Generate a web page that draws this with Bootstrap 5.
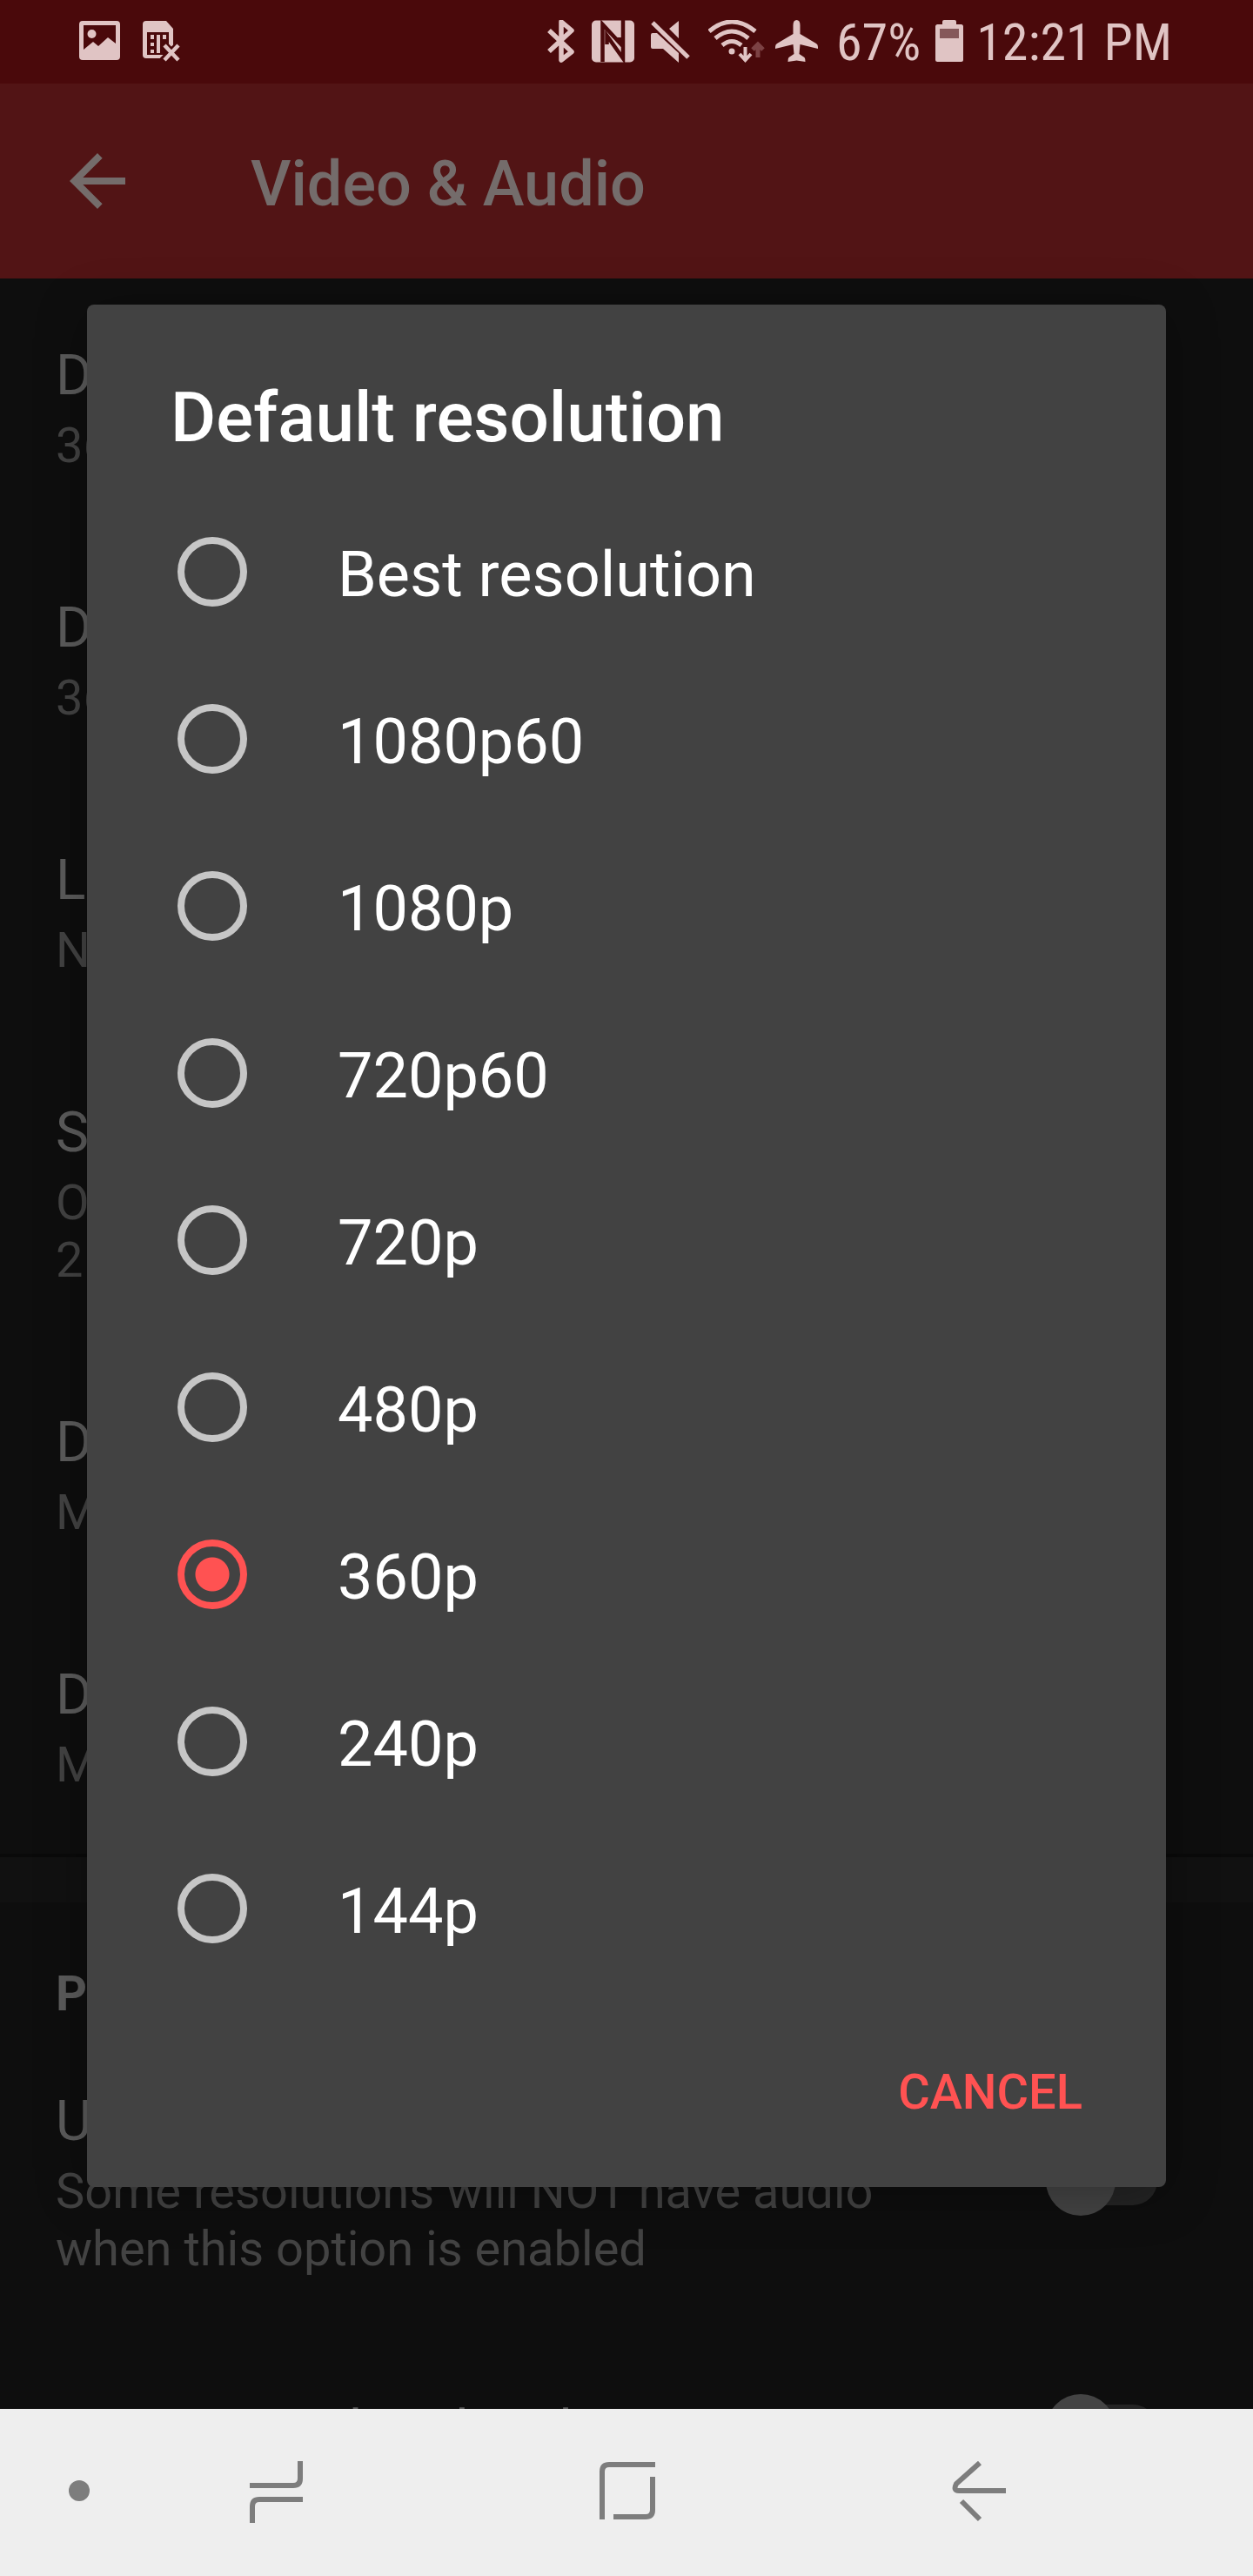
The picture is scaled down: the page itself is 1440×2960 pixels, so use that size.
<!DOCTYPE html>
<html lang="en">
<head>
<meta charset="utf-8">
<meta name="viewport" content="width=device-width, initial-scale=1">
<title>Video &amp; Audio</title>
<link rel="stylesheet" href="https://cdn.jsdelivr.net/npm/bootstrap@5.3.0/dist/css/bootstrap.min.css">
<style>
  body { font-family: Roboto, "Noto Sans", sans-serif; background: #0e0e0e; color: #5c5c5c; }
  .phone { height: 100vh; }
  .status-strip { height: 96px; padding: 0 93px 0 91px; background: #4a090b; color: #e0c4c4; font-family: "Roboto Condensed", "Liberation Sans Narrow", Roboto, sans-serif; font-size: 60px; line-height: 72px; }
  .status-strip svg { height: 50px; flex: none; }
  .status-strip span { padding-top: 2px; }
  .alert-icons { gap: 26px; }
  .status-icons { gap: 11px; }
  .app-bar { height: 224px; padding: 0 64px; gap: 128px; background: #521415; color: #746c6b; }
  .app-bar h1 { padding-top: 7px; font-size: 72px; line-height: 84px; font-weight: 500; }
  .app-bar svg { width: 96px; height: 96px; }
  .settings { padding-top: 4px; }
  .setting { padding: 70px 110px 69px 64px; gap: 150px; }
  .setting-title { font-size: 64px; line-height: 76px; }
  .setting-note { margin-top: 9px; font-size: 56px; line-height: 66px; color: #434343; }
  .group-gap { height: 56px; background: #111; border-top: 4px solid #0a0a0a; }
  .group-name { padding: 72px 64px 6px; font-size: 56px; line-height: 66px; font-weight: 700; }
  .toggle.form-check-input { position: relative; width: 128px; height: 80px; margin: -8px 0 -2px; border: 0; background: none; flex: none; }
  .toggle::before { content: ""; position: absolute; inset: 12px 0 12px 12px; border-radius: 28px; background: #242424; }
  .toggle::after { content: ""; position: absolute; left: 0; top: 0; width: 80px; height: 80px; border-radius: 50%; background: #444; }
  .chooser.modal { top: 96px; height: auto; bottom: 194px; padding: 0 100px; }
  .chooser .modal-dialog { margin: 0; max-width: none; }
  .chooser .modal-content { background: #424242; color: #fff; border: 0; border-radius: 8px; box-shadow: 0 8px 60px rgba(0,0,0,.3); }
  .chooser .modal-header { padding: 82px 96px 33px; border: 0; }
  .chooser h2 { font-size: 80px; line-height: 96px; font-weight: 500; }
  .choice { height: 192px; padding: 0 104px; gap: 104px; font-size: 72px; line-height: 84px; }
  .choice span { padding-top: 8px; }
  .choice .form-check-input { width: 80px; height: 80px; margin: 0; border: 8px solid #c6c6c6; background: none; flex: none; }
  .choice .form-check-input:checked { border-color: #ff5252; background: radial-gradient(circle, #ff5252 19px, transparent 20px); }
  .chooser .modal-footer { padding: 42px 64px 36px; border: 0; }
  .chooser .modal-footer .btn { margin: 0; padding: 40px 32px; border: 0; color: #ff5252; font-size: 56px; line-height: 66px; font-weight: 500; }
  .nav-keys { height: 192px; padding-right: 115px; background: #eee; color: #7d7d7d; }
  .nav-keys .btn { color: inherit; border: 0; padding: 0; }
  .nav-keys svg { width: 72px; height: 72px; flex: none; }
  .nav-keys .pin-key { width: 117px; flex: none; padding-left: 65px; }
</style>
<script src="https://cdn.jsdelivr.net/npm/bootstrap@5.3.0/dist/js/bootstrap.bundle.min.js"></script>
</head>
<body>
<div class="phone d-flex flex-column overflow-hidden">
  <div class="status-strip d-flex align-items-center flex-shrink-0">
    <div class="alert-icons d-flex align-items-center">
      <svg width="47" viewBox="0 0 47 50" fill="currentColor"><path fill-rule="evenodd" d="M4 1h39a4 4 0 0 1 4 4v37a4 4 0 0 1-4 4H4a4 4 0 0 1-4-4V5a4 4 0 0 1 4-4zM5 6v28l11-9 6 5 11-10 9 7V6z"/><circle cx="14.500" cy="16" r="5"/></svg>
      <svg width="44" viewBox="0 0 44 50"><path fill="currentColor" d="M4 1h23l8 9v29l-6 5H4a4 4 0 0 1-4-4V5a4 4 0 0 1 4-4z"/><path d="M5 14h25v26H5z" fill="#4a090b"/><path d="M9 17h4v5H9zM9 26h4v4H9zM9 34h4v4H9zM16 17h4v21h-4zM23 17h4v5h-4z" fill="currentColor"/><path d="M23 27l20 20M43 27L23 47" stroke="#4a090b" stroke-width="9"/><path d="M25 29l16 17M41 29L25 46" stroke="currentColor" stroke-width="4.500"/></svg>
    </div>
    <div class="status-icons d-flex align-items-center ms-auto">
      <svg width="40" viewBox="0 0 40 50" fill="none" stroke="currentColor" stroke-width="5.500" stroke-linejoin="round"><path d="M2 12l26 24.500L16 46V2l12 10L2 36"/></svg>
      <svg width="57" viewBox="0 0 57 50"><rect y="0.500" width="49" height="48" rx="5" fill="currentColor"/><path d="M12.500 48V5L32 26v-6M36 0v44L17.500 18v10" fill="none" stroke="#4a090b" stroke-width="4.500"/></svg>
      <svg width="55" viewBox="0 0 55 50" fill="currentColor"><path d="M2 15h5l25 23v11L14 33H2q-2 0-2-2V17q0-2 2-2zM21 10L32 1v20z"/><path d="M2 3l41 40" stroke="currentColor" stroke-width="5"/></svg>
      <svg width="66" viewBox="0 0 66 50" fill="none" stroke="currentColor" stroke-width="5"><path d="M1 13Q27-9 54 13M8 21Q27 5 46 21M16 29Q27 20 38 29"/><circle cx="27" cy="36" r="3.500" fill="currentColor" stroke="none"/><path d="M42.500 31v14M36 39l6.500 7 6.500-7" stroke-width="4"/><path d="M57 43V29M51 34l6-6 6 6" stroke="#7c4244" stroke-width="5"/></svg>
      <svg width="59" viewBox="0 0 59 50" fill="currentColor"><path d="M24.500 0q-4 0-4 6v10L2 27q-2 1-2 4v2l20.500-5 1 11-6 4q-1 1-1 5l10-1.500 10 1.500q0-4-1-5l-6-4 1-11L49 33v-2q0-3-2-4L28.500 16V6q0-6-4-6z"/></svg>
      <span>67%</span>
      <svg width="42" viewBox="-6 0 42 50" fill="currentColor"><rect x="8" width="16" height="9" rx="2"/><rect y="5" width="32" height="43" rx="2.500"/><path d="M5 10h22v11H5z" fill="#85585a"/></svg>
      <span>12:21 PM</span>
    </div>
  </div>
  <header class="app-bar d-flex align-items-center flex-shrink-0">
    <button type="button" class="btn p-0 border-0 text-reset" aria-label="Navigate up"><svg class="d-block" viewBox="0 0 24 24" fill="currentColor"><path d="M20 11H7.830l5.590-5.590L12 4l-8 8 8 8 1.410-1.410L7.830 13H20v-2z"/></svg></button>
    <h1 class="mb-0">Video &amp; Audio</h1>
  </header>
  <main class="settings flex-grow-1 overflow-hidden">
    <div class="setting"><div class="setting-title">Default resolution</div><div class="setting-note">360p</div></div>
    <div class="setting"><div class="setting-title">Default popup resolution</div><div class="setting-note">360p</div></div>
    <div class="setting"><div class="setting-title">Limit resolution on mobile data</div><div class="setting-note">No limit</div></div>
    <div class="setting d-flex align-items-center">
      <label class="flex-grow-1" for="higher"><span class="setting-title d-block">Show higher resolutions</span><span class="setting-note d-block">Only some devices support playing 2K/4K videos</span></label>
      <input class="form-check-input toggle" type="checkbox" role="switch" id="higher">
    </div>
    <div class="setting"><div class="setting-title">Default video format</div><div class="setting-note">MPEG-4</div></div>
    <div class="setting"><div class="setting-title">Default audio format</div><div class="setting-note">M4A</div></div>
    <div class="group-gap"></div>
    <div class="group-name">Player</div>
    <div class="setting d-flex align-items-center">
      <label class="flex-grow-1" for="extvideo"><span class="setting-title d-block">Use external video player</span><span class="setting-note d-block">Some resolutions will NOT have audio when this option is enabled</span></label>
      <input class="form-check-input toggle" type="checkbox" role="switch" id="extvideo">
    </div>
    <div class="setting d-flex align-items-center">
      <label class="flex-grow-1" for="extaudio"><span class="setting-title d-block">Use external audio player</span></label>
      <input class="form-check-input toggle" type="checkbox" role="switch" id="extaudio">
    </div>
  </main>
  <nav class="nav-keys d-flex align-items-stretch flex-shrink-0" aria-label="System">
    <button type="button" class="btn pin-key d-flex align-items-center" aria-label="Pin bar"><svg viewBox="0 0 72 72" fill="currentColor"><circle cx="26" cy="34" r="12"/></svg></button>
    <button type="button" class="btn flex-fill w-100" aria-label="Recents"><svg viewBox="0 0 72 72" fill="none" stroke="currentColor" stroke-width="6"><path d="M5 28h50q8 0 8-8V-1M66 44H16q-8 0-8 8v19"/></svg></button>
    <button type="button" class="btn flex-fill w-100" aria-label="Home"><svg viewBox="0 0 72 72" fill="none" stroke="currentColor" stroke-width="6"><path d="M68 4H15q-8 0-8 8v55M65 18v38q0 8-8 8H20"/></svg></button>
    <button type="button" class="btn flex-fill w-100" aria-label="Back"><svg viewBox="0 0 72 72" fill="none" stroke="currentColor" stroke-width="6"><path d="M38 2L11 26q-4 8 3 8h54M17 46l21 21"/></svg></button>
  </nav>
</div>

<div class="chooser modal d-flex align-items-center" role="dialog" aria-labelledby="chooserTitle">
  <div class="modal-dialog w-100">
    <form class="modal-content">
      <div class="modal-header"><h2 class="m-0" id="chooserTitle">Default resolution</h2></div>
      <div class="modal-body p-0">
        <label class="choice d-flex align-items-center"><input class="form-check-input" type="radio" name="res"><span>Best resolution</span></label>
        <label class="choice d-flex align-items-center"><input class="form-check-input" type="radio" name="res"><span>1080p60</span></label>
        <label class="choice d-flex align-items-center"><input class="form-check-input" type="radio" name="res"><span>1080p</span></label>
        <label class="choice d-flex align-items-center"><input class="form-check-input" type="radio" name="res"><span>720p60</span></label>
        <label class="choice d-flex align-items-center"><input class="form-check-input" type="radio" name="res"><span>720p</span></label>
        <label class="choice d-flex align-items-center"><input class="form-check-input" type="radio" name="res"><span>480p</span></label>
        <label class="choice d-flex align-items-center"><input class="form-check-input" type="radio" name="res" checked><span>360p</span></label>
        <label class="choice d-flex align-items-center"><input class="form-check-input" type="radio" name="res"><span>240p</span></label>
        <label class="choice d-flex align-items-center"><input class="form-check-input" type="radio" name="res"><span>144p</span></label>
      </div>
      <div class="modal-footer"><button type="button" class="btn">CANCEL</button></div>
    </form>
  </div>
</div>
</body>
</html>
